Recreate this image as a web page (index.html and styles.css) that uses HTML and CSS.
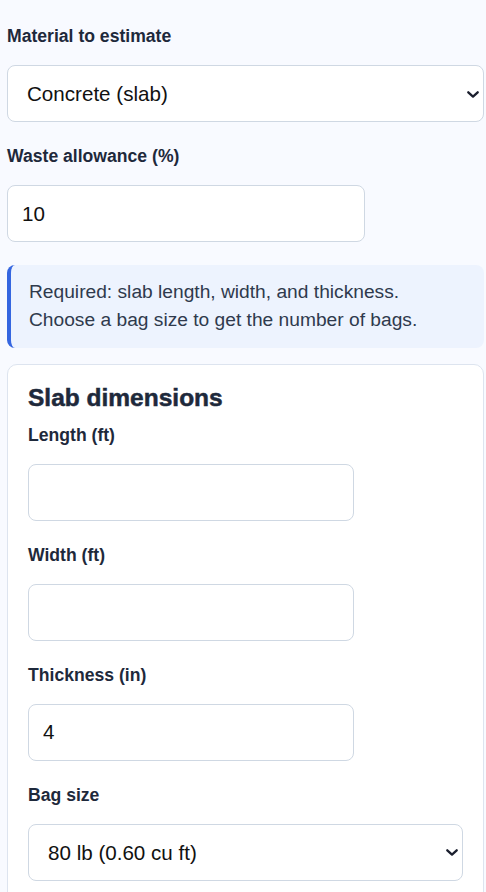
FILE: index.html
```html
<!DOCTYPE html>
<html lang="en">

<head>
    <meta charset="UTF-8">
    <meta name="viewport" content="width=device-width, initial-scale=1.0">
    <title>Material estimator</title>
    <link rel="stylesheet" href="styles.css">
</head>

<body>
    <main class="calc">
        <div class="field">
            <label class="field-label" for="material">Material to estimate</label>
            <div class="select-wrap">
                <select id="material" class="control control-select">
                    <option>Concrete (slab)</option>
                    <option>Gravel</option>
                    <option>Mulch</option>
                </select>
                <svg class="select-arrow" width="12" height="7" viewBox="0 0 12 7"><path d="M1.3 1.3 L6 5.6 L10.7 1.3" fill="none" stroke="#1b1f2e" stroke-width="2.3" stroke-linecap="round" stroke-linejoin="round"/></svg>
            </div>
        </div>
        <div class="field">
            <label class="field-label" for="waste">Waste allowance (%)</label>
            <input id="waste" class="control control-short" type="text" value="10">
        </div>

        <div class="note">
            Required: slab length, width, and thickness.<br>
            Choose a bag size to get the number of bags.
        </div>

        <section class="card">
            <h2 class="card-title">Slab dimensions</h2>
            <div class="field">
                <label class="field-label" for="length">Length (ft)</label>
                <input id="length" class="control control-short" type="text">
            </div>
            <div class="field">
                <label class="field-label" for="width">Width (ft)</label>
                <input id="width" class="control control-short" type="text">
            </div>
            <div class="field">
                <label class="field-label" for="thick">Thickness (in)</label>
                <input id="thick" class="control control-short" type="text" value="4">
            </div>
            <div class="field">
                <label class="field-label" for="bag">Bag size</label>
                <div class="select-wrap">
                    <select id="bag" class="control control-select">
                        <option>80 lb (0.60 cu ft)</option>
                        <option>60 lb (0.45 cu ft)</option>
                        <option>40 lb (0.30 cu ft)</option>
                    </select>
                    <svg class="select-arrow" width="12" height="7" viewBox="0 0 12 7"><path d="M1.3 1.3 L6 5.6 L10.7 1.3" fill="none" stroke="#1b1f2e" stroke-width="2.3" stroke-linecap="round" stroke-linejoin="round"/></svg>
                </div>
            </div>
        </section>
    </main>
</body>

</html>
```

FILE: styles.css
```css
* {
    margin: 0;
    padding: 0;
    box-sizing: border-box;
}

body {
    background: #f8faff;
    font-family: "Liberation Sans", Arial, sans-serif;
    color: #1e293b;
}

.calc {
    padding: 25px 2px 40px 7px;
}

.field {
    margin-bottom: 23px;
}

.field-label {
    display: block;
    font-size: 17.6px;
    font-weight: bold;
    line-height: 22px;
    margin-bottom: 18px;
    color: #1e293b;
}

.control {
    display: block;
    width: 100%;
    height: 57px;
    padding: 0 14px;
    border: 1px solid #cfd8e3;
    border-radius: 8px;
    background: #fff;
    font-family: "Liberation Sans", Arial, sans-serif;
    font-size: 20.6px;
    color: #111;
}

.control-short {
    width: 75%;
}

.select-wrap {
    position: relative;
}

.control-select {
    appearance: none;
    -webkit-appearance: none;
    padding: 0 30px 0 19px;
}

.select-arrow {
    position: absolute;
    right: 5px;
    top: 50%;
    margin-top: -3px;
    pointer-events: none;
}

.note {
    margin-bottom: 16px;
    padding: 13px 18px;
    border-left: 4px solid #3566e0;
    border-radius: 8px;
    background: #edf3fe;
    font-size: 19.2px;
    line-height: 28.3px;
    color: #2f3a4d;
}

.card {
    padding: 19px 20px 20px;
    border: 1px solid #dde4ef;
    border-radius: 10px;
    background: #fff;
}

.card-title {
    font-size: 24.5px;
    line-height: 28px;
    font-weight: bold;
    margin-bottom: 12px;
    color: #1e293b;
    -webkit-text-stroke: 0.5px #1e293b;
}
```
